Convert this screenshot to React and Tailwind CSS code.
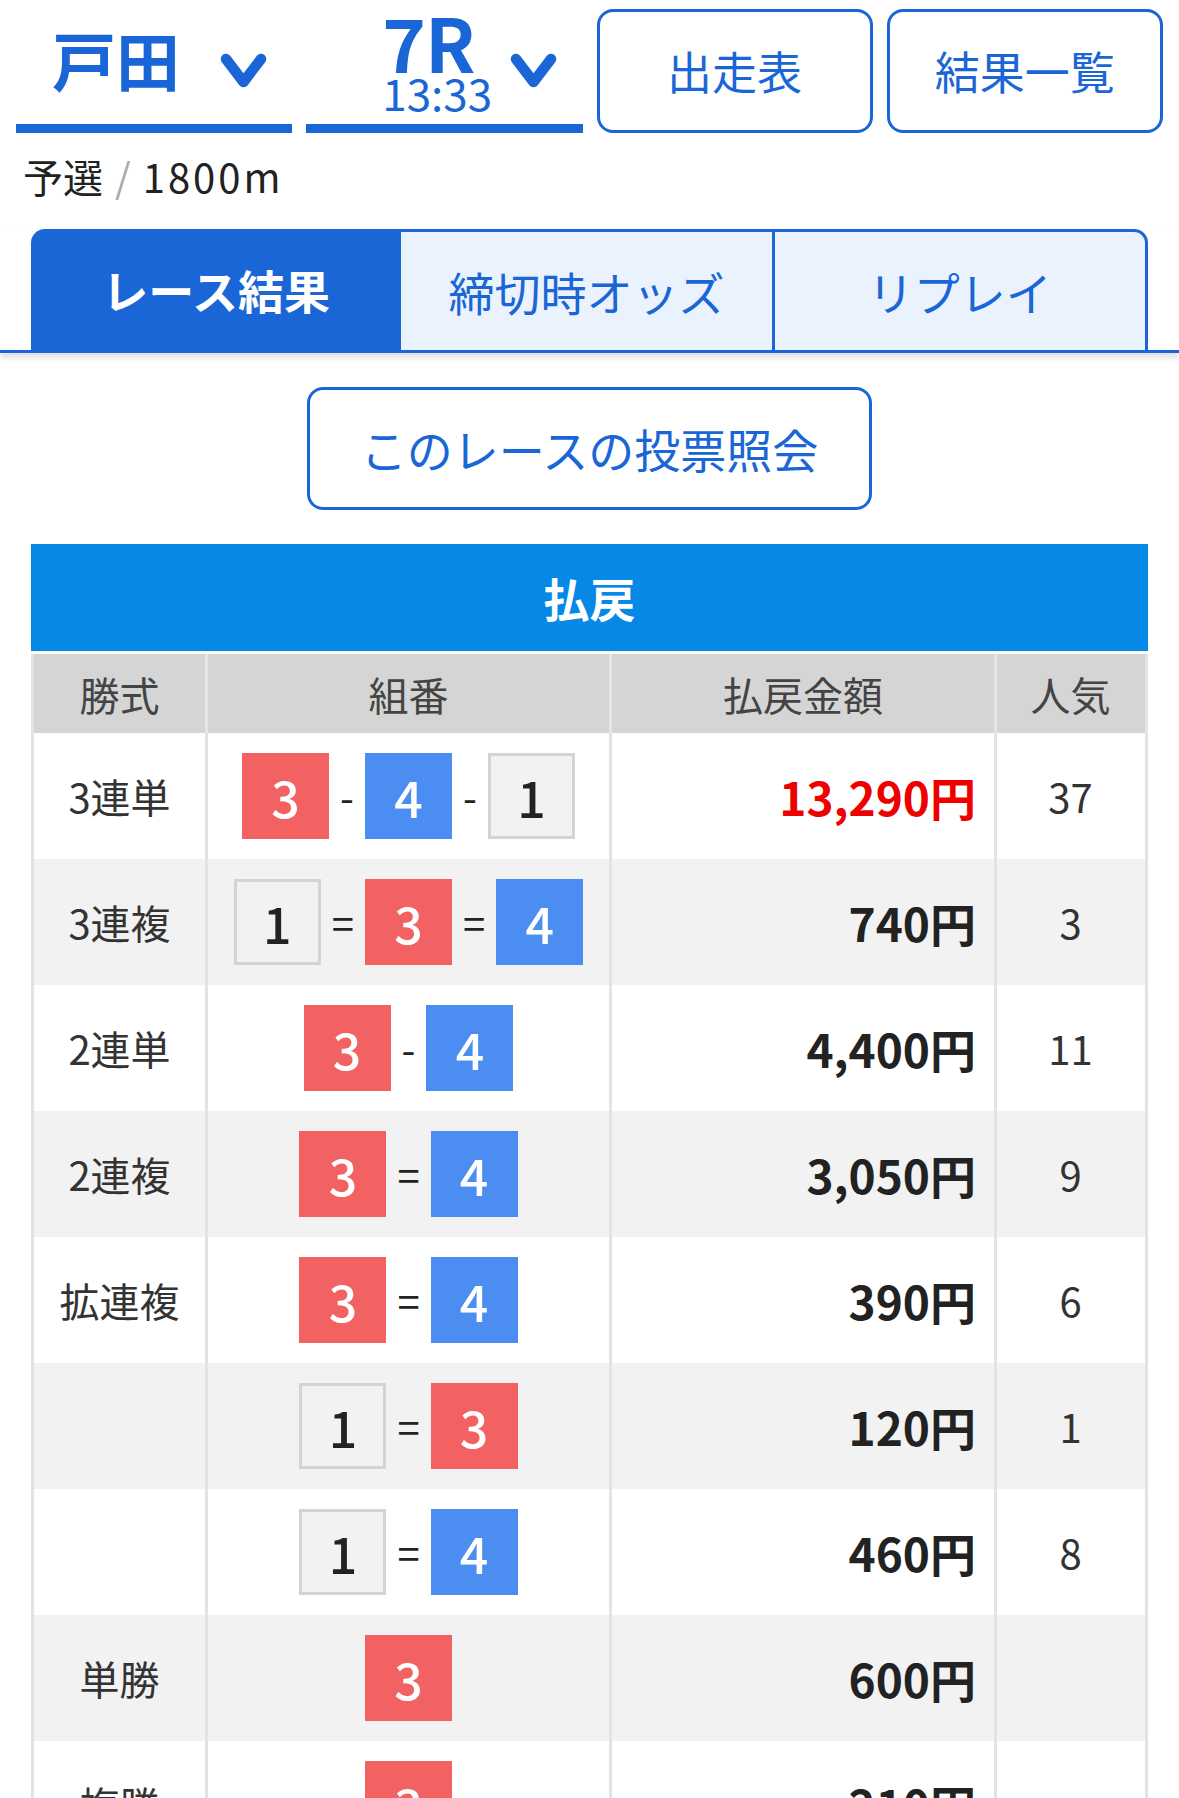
import React from "react";

const ROWS = [
  { type: "3連単", combo: ["3r", "-", "4b", "-", "1w"], amount: "13,290円", hot: true, pop: "37" },
  { type: "3連複", combo: ["1w", "=", "3r", "=", "4b"], amount: "740円", pop: "3" },
  { type: "2連単", combo: ["3r", "-", "4b"], amount: "4,400円", pop: "11" },
  { type: "2連複", combo: ["3r", "=", "4b"], amount: "3,050円", pop: "9" },
  { type: "拡連複", combo: ["3r", "=", "4b"], amount: "390円", pop: "6" },
  { type: "", combo: ["1w", "=", "3r"], amount: "120円", pop: "1" },
  { type: "", combo: ["1w", "=", "4b"], amount: "460円", pop: "8" },
  { type: "単勝", combo: ["3r"], amount: "600円", pop: "" },
  { type: "複勝", combo: ["3r"], amount: "210円", pop: "" },
];

function Chevron() {
  return (
    <svg width="47" height="38" viewBox="0 0 47 38" className="shrink-0">
      <polyline
        points="6,7 23.5,30 41,7"
        fill="none"
        stroke="#1a66d6"
        strokeWidth="10.5"
        strokeLinecap="round"
        strokeLinejoin="round"
      />
    </svg>
  );
}

function NumBox({ v }) {
  const n = v[0];
  const c = v[1];
  const color =
    c === "r"
      ? "bg-[#f26262] text-white"
      : c === "b"
      ? "bg-[#4b8df0] text-white"
      : "bg-[#f2f2f2] border-[3px] border-[#d4d4d4] text-[#222]";
  return (
    <span
      className={`flex h-[86px] w-[87px] items-center justify-center text-[50px] font-medium leading-none ${color}`}
    >
      {n}
    </span>
  );
}

export default function App() {
  return (
    <div className="h-[1798px] w-full overflow-hidden bg-white font-['Noto_Sans_CJK_JP','Noto_Sans',sans-serif] text-[#333]">
      {/* top selectors */}
      <div className="grid grid-cols-4 gap-[14px] px-[16px] pt-[9px]">
        <div className="flex h-[124px] items-center border-b-[9px] border-[#1a66d6] pl-[36px] pr-[25px]">
          <span className="mb-[18px] text-[64px] font-bold leading-none text-[#1a66d6]">戸田</span>
          <span className="ml-auto mt-[9px]">
            <Chevron />
          </span>
        </div>
        <div className="flex h-[124px] items-center border-b-[9px] border-[#1a66d6] pl-[76px] pr-[26px]">
          <div className="mb-[12px] flex flex-col text-[#1a66d6]">
            <span className="text-[74px] font-semibold leading-[62px] tracking-[-1px]">7R</span>
            <span className="text-[44px] leading-[40px]">13:33</span>
          </div>
          <span className="ml-auto mt-[9px]">
            <Chevron />
          </span>
        </div>
        <button className="h-[124px] rounded-[16px] border-[3px] border-[#1a66d6] text-[45px] text-[#1a66d6]">
          出走表
        </button>
        <button className="h-[124px] rounded-[16px] border-[3px] border-[#1a66d6] text-[45px] text-[#1a66d6]">
          結果一覧
        </button>
      </div>

      {/* race info */}
      <div className="flex h-[96px] items-center pb-[10px] pl-[23px] text-[40px] text-[#222]">
        予選<span className="mx-[12px] text-[#aaa]">/</span>
        <span className="tracking-[3px]">1800m</span>
      </div>

      {/* tabs */}
      <div className="border-b-[3px] border-[#1a66d6] shadow-[0_5px_6px_rgba(0,0,0,0.12)]">
        <div className="flex px-[31px]">
          <div className="flex h-[121px] flex-1 items-center justify-center rounded-tl-[14px] bg-[#1a66d6] text-[46px] font-bold text-white">
            レース結果
          </div>
          <div className="flex h-[121px] flex-1 items-center justify-center border-t-[3px] border-[#1a66d6] bg-[#eaf2fd] text-[46px] text-[#1a66d6]">
            締切時オッズ
          </div>
          <div className="flex h-[121px] flex-1 items-center justify-center rounded-tr-[14px] border-x-[3px] border-t-[3px] border-[#1a66d6] bg-[#eaf2fd] text-[46px] text-[#1a66d6]">
            リプレイ
          </div>
        </div>
      </div>

      {/* vote inquiry */}
      <div className="flex justify-center pt-[34px] pb-[34px]">
        <button className="h-[123px] w-[565px] rounded-[16px] border-[3px] border-[#1a66d6] text-[46px] text-[#1a66d6]">
          このレースの投票照会
        </button>
      </div>

      {/* payout table */}
      <div className="mx-[31px]">
        <div className="flex h-[107px] items-center justify-center bg-[#0588e6] text-[46px] font-bold text-white">
          払戻
        </div>
        <div className="mt-[3px] border-x-[3px] border-[#e3e3e3]">
          <div className="grid h-[79px] grid-cols-[171px_404px_385px_150px] bg-[#d5d5d5] text-[40px] text-[#444]">
            <div className="flex items-center justify-center">勝式</div>
            <div className="flex items-center justify-center border-l-[3px] border-[#e6e6e6]">組番</div>
            <div className="flex items-center justify-center border-l-[3px] border-[#e6e6e6]">払戻金額</div>
            <div className="flex items-center justify-center border-l-[3px] border-[#e6e6e6]">人気</div>
          </div>
          {ROWS.map((r, i) => (
            <div
              key={i}
              className={`grid h-[126px] grid-cols-[171px_404px_385px_150px] ${
                i % 2 === 1 ? "bg-[#f2f2f2]" : "bg-white"
              }`}
            >
              <div className="flex items-center justify-center text-[40px] text-[#333]">{r.type}</div>
              <div className="flex items-center justify-center gap-[11px] border-l-[3px] border-[#e3e3e3]">
                {r.combo.map((c, j) =>
                  c === "-" || c === "=" ? (
                    <span key={j} className="text-[40px] leading-none text-[#222]">
                      {c}
                    </span>
                  ) : (
                    <NumBox key={j} v={c} />
                  )
                )}
              </div>
              <div
                className={`flex items-center justify-end border-l-[3px] border-[#e3e3e3] pr-[18px] text-[46px] font-semibold ${
                  r.hot ? "text-[#ee0000]" : "text-[#222]"
                }`}
              >
                {r.amount}
              </div>
              <div className="flex items-center justify-center border-l-[3px] border-[#e3e3e3] text-[40px] text-[#333]">
                {r.pop}
              </div>
            </div>
          ))}
        </div>
      </div>
    </div>
  );
}
